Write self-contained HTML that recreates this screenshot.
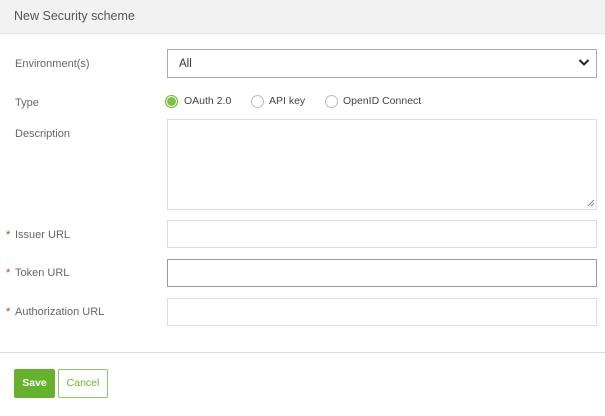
<!DOCTYPE html>
<html><head><style>
body{margin:0;width:605px;height:416px;background:#fff;font-family:"Liberation Sans",sans-serif;font-size:11px;color:#555;position:relative;overflow:hidden}
.a{position:absolute}
.hdr{left:0;top:0;width:605px;height:33px;background:#f2f2f2;border-bottom:1px solid #e2e2e2}
.hdr span{position:absolute;left:14px;top:9px;font-size:12.5px;color:#555}
.lbl{left:15px;font-size:11px;color:#666}
.star{color:#c0392b;position:absolute;left:-9px;top:0}
.box{left:167px;width:428px;border:1px solid #ddd;background:#fff}
.rad{width:11px;height:11px;border:1px solid #bbb;border-radius:50%;top:95px}
</style></head><body>
<div class="a hdr"><span>New Security scheme</span></div>
<div class="a lbl" style="top:58px">Environment(s)</div>
<div class="a box" style="top:49px;height:27px;border-color:#aaa"></div>
<div class="a" style="left:179px;top:58px;font-size:11.5px;color:#333">All</div>
<svg class="a" style="left:578px;top:58px" width="12" height="9"><path d="M1.5 2 L6 6.5 L10.5 2" stroke="#222" stroke-width="2" fill="none"/></svg>
<div class="a lbl" style="top:97px">Type</div>
<div class="a rad" style="left:165px;border-color:#6ab42f;background:#7cc242;box-shadow:inset 0 0 0 1px #fff"></div>
<div class="a" style="left:184px;top:95px;font-size:10.5px;color:#444">OAuth 2.0</div>
<div class="a rad" style="left:251px"></div>
<div class="a" style="left:269px;top:95px;font-size:10.5px;color:#444">API key</div>
<div class="a rad" style="left:325px"></div>
<div class="a" style="left:343px;top:95px;font-size:10.5px;color:#444">OpenID Connect</div>
<div class="a lbl" style="top:128px">Description</div>
<div class="a box" style="top:119px;height:89px"></div>
<svg class="a" style="left:587px;top:199px" width="8" height="8"><path d="M1 7 L7 1 M4 7 L7 4" stroke="#888" stroke-width="1"/></svg>
<div class="a lbl" style="top:229px"><span class="star">*</span>Issuer URL</div>
<div class="a box" style="top:220px;height:26px"></div>
<div class="a lbl" style="top:267px"><span class="star">*</span>Token URL</div>
<div class="a box" style="top:259px;height:26px;border-color:#999"></div>
<div class="a lbl" style="top:306px"><span class="star">*</span>Authorization URL</div>
<div class="a box" style="top:298px;height:26px"></div>
<div class="a" style="left:0;top:352px;width:605px;height:1px;background:#ddd"></div>
<div class="a" style="left:14px;top:369px;width:41px;height:29px;background:#66b22e;border-radius:2px;color:#fff;font-weight:bold;font-size:10.5px;text-align:center;line-height:29px">Save</div>
<div class="a" style="left:58px;top:369px;width:48px;height:27px;border:1px solid #8cc867;border-radius:2px;color:#6ab42f;font-size:10.5px;text-align:center;line-height:27px">Cancel</div>
</body></html>
